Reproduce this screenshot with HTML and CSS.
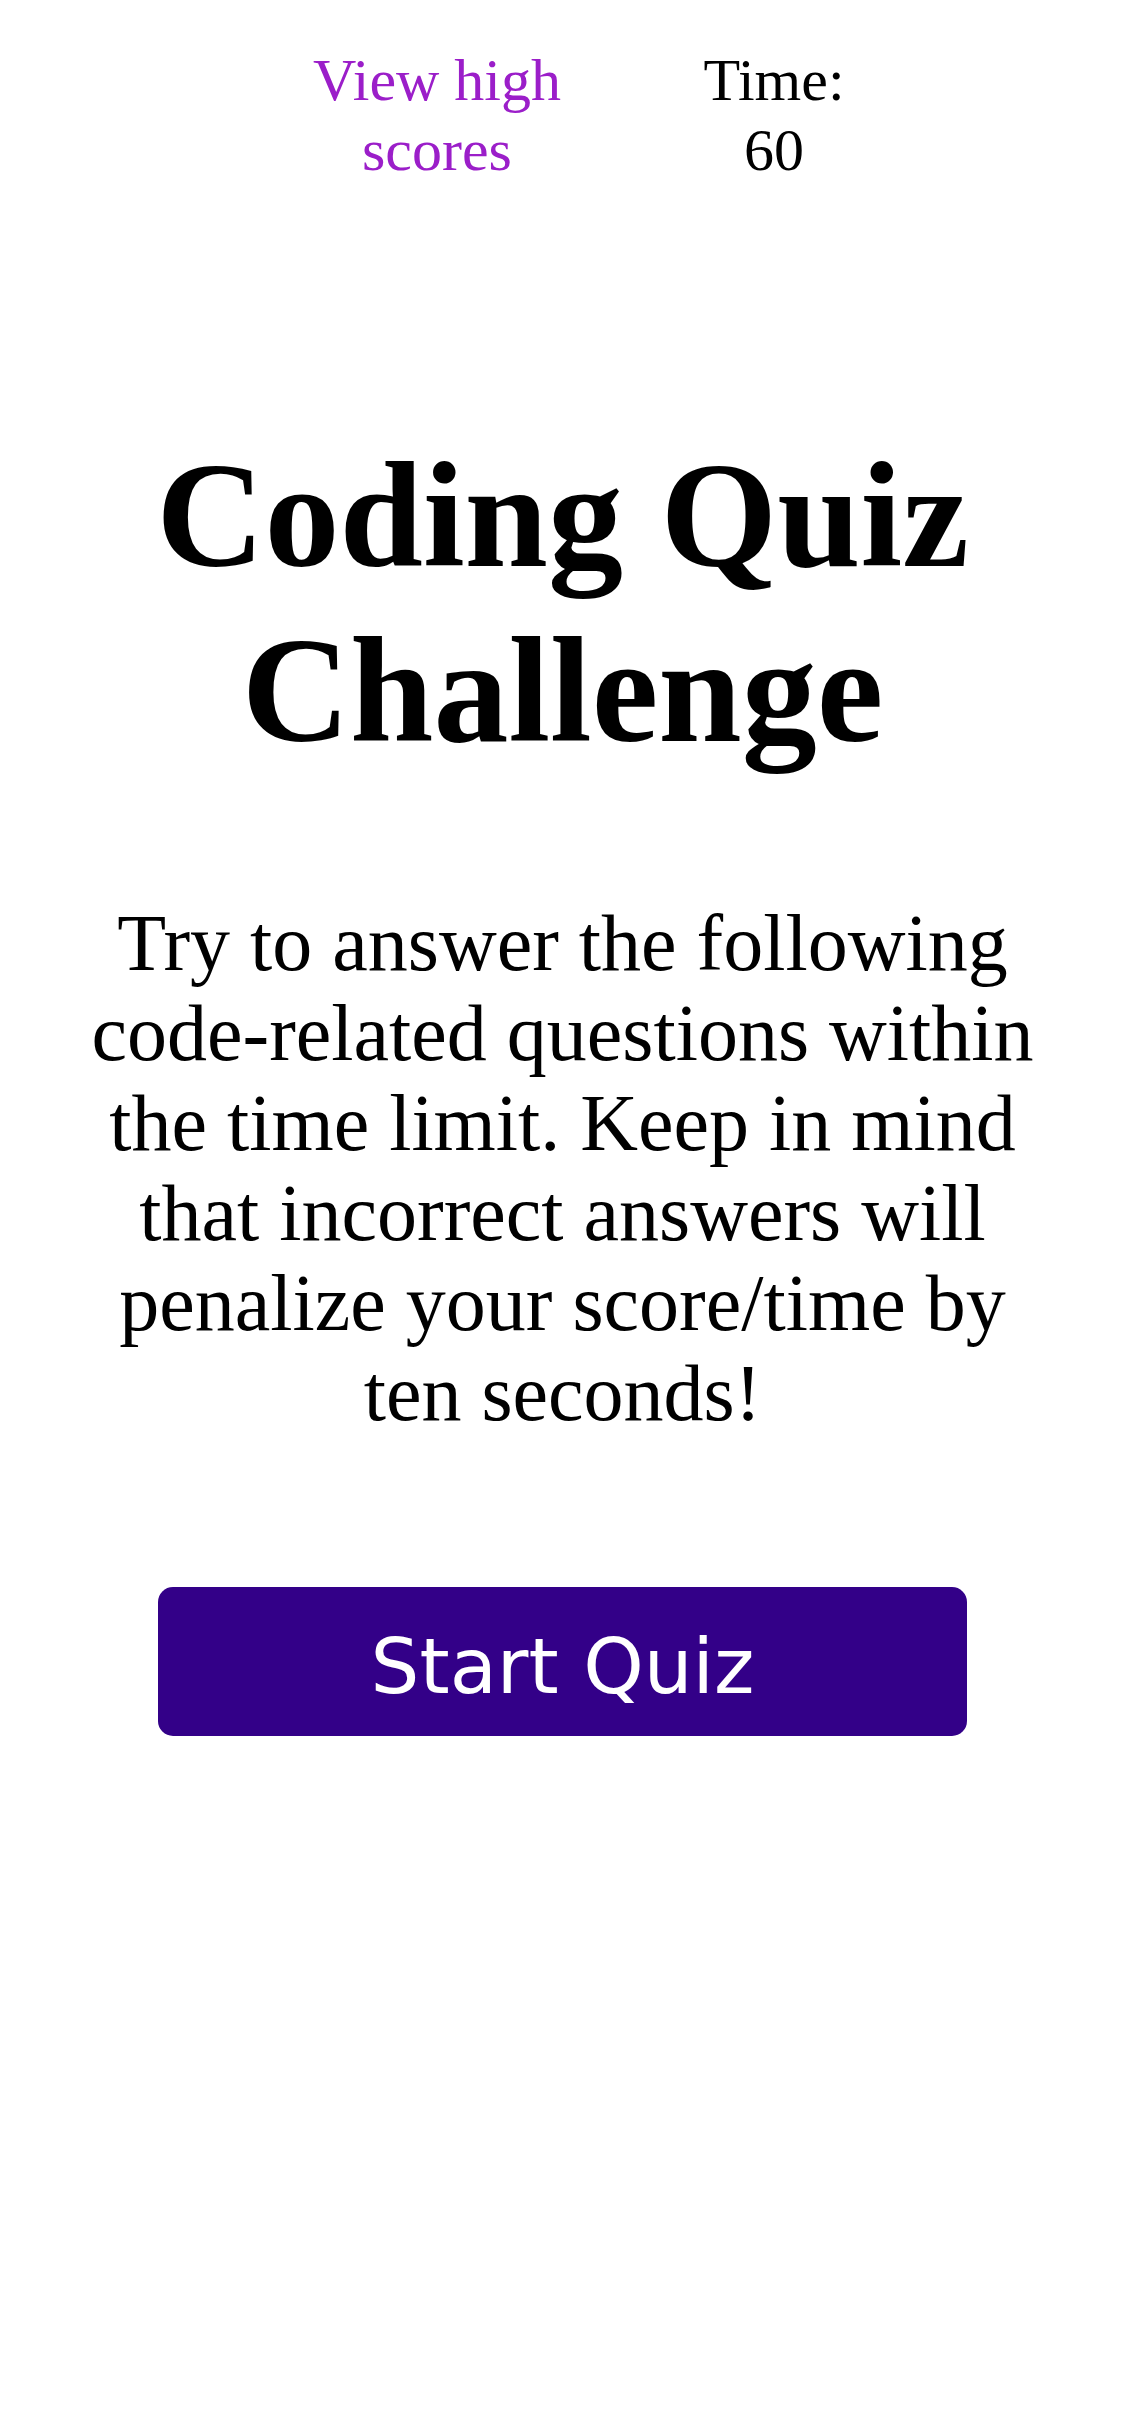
FILE: index.html
```html
<!DOCTYPE html>
<html lang="en">
<head>
<meta charset="utf-8">
<title>Coding Quiz Challenge</title>
<link rel="stylesheet" href="styles.css">
</head>
<body>
<header class="top-bar">
  <div class="scores-box"><a class="scores-link" href="#">View high scores</a></div>
  <div class="timer-box">Time: <span class="timer-value">60</span></div>
</header>
<main class="intro">
  <h1 class="title">Coding Quiz Challenge</h1>
  <p class="lead">Try to answer the following code-related questions within the time limit. Keep in mind that incorrect answers will penalize your score/time by ten seconds!</p>
  <button class="start-btn" type="button">Start Quiz</button>
</main>
</body>
</html>
```
FILE: styles.css
```css
html, body {
  margin: 0;
  padding: 0;
  background: #ffffff;
}

body {
  font-family: "Liberation Serif", "Times New Roman", serif;
  color: #000000;
  width: 1125px;
}

.top-bar {
  display: flex;
  justify-content: center;
  gap: 97px;
  padding: 45px 0 0 26px;
  font-size: 60px;
  line-height: 70px;
  text-align: center;
}

.scores-box {
  width: 300px;
}

.timer-box {
  width: 180px;
}

.scores-link {
  color: #9b1ec9;
  text-decoration: none;
}

.intro {
  display: flex;
  flex-direction: column;
  align-items: center;
}

.title {
  margin: 243px 0 0;
  font-size: 150px;
  line-height: 175px;
  font-weight: bold;
  text-align: center;
}

.lead {
  margin: 120px 0 0;
  width: 975px;
  font-size: 80px;
  line-height: 90px;
  text-align: center;
}

.start-btn {
  margin: 149px 0 0;
  width: 809px;
  height: 149px;
  box-sizing: border-box;
  padding: 10px 0 0;
  border: 0;
  border-radius: 15px;
  background: #330088;
  color: #ffffff;
  font-family: "DejaVu Sans", Verdana, sans-serif;
  font-size: 77px;
  line-height: 139px;
  cursor: pointer;
}
```
